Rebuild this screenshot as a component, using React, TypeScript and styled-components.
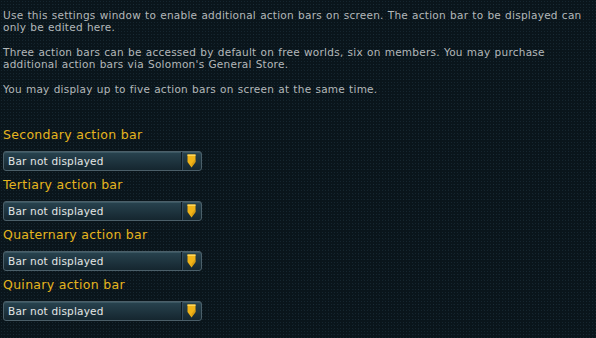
import React from "react";
import styled, { createGlobalStyle } from "styled-components";

const GlobalStyle = createGlobalStyle`
  html, body {
    margin: 0;
    padding: 0;
    background: #0a151b;
  }
`;

const bars = [
  "Secondary action bar",
  "Tertiary action bar",
  "Quaternary action bar",
  "Quinary action bar",
];

const ShieldIcon = () => (
  <svg width="9" height="14" viewBox="0 0 9 14">
    <path d="M0.5 0.5 H8.5 V8 L4.5 13.5 L0.5 8 Z" fill="#f0b419" />
    <path d="M0.5 0.5 H8.5 V2 H0.5 Z" fill="#ffd75a" />
    <path d="M4.5 13.5 L8.5 8 V5 L4.5 10 Z" fill="#c98d0c" opacity="0.6" />
  </svg>
);

const App: React.FC = () => {
  return (
    <Page>
      <GlobalStyle />
      <Intro>
        <p>
          Use this settings window to enable additional action bars on screen.
          The action bar to be displayed can only be edited here.
        </p>
        <p>
          Three action bars can be accessed by default on free worlds, six on
          members. You may purchase additional action bars via Solomon's
          General Store.
        </p>
        <p>You may display up to five action bars on screen at the same time.</p>
      </Intro>
      <BarList>
        {bars.map((label) => (
          <BarSetting key={label}>
            <Label>{label}</Label>
            <Dropdown>
              <DropdownText>Bar not displayed</DropdownText>
              <DropdownArrow>
                <ShieldIcon />
              </DropdownArrow>
            </Dropdown>
          </BarSetting>
        ))}
      </BarList>
    </Page>
  );
};

const Page = styled.div`
  width: 596px;
  height: 338px;
  box-sizing: border-box;
  overflow: hidden;
  padding: 9px 0 0 3px;
  background-color: #0a151b;
  background-image: radial-gradient(rgba(60, 90, 110, 0.25) 0.5px, transparent 0.6px),
    radial-gradient(rgba(40, 70, 90, 0.2) 0.5px, transparent 0.6px);
  background-size: 3px 3px, 5px 5px;
  background-position: 0 0, 1px 2px;
  font-family: "DejaVu Sans", sans-serif;
`;

const Intro = styled.div`
  width: 590px;
  color: #b3b8ba;
  font-size: 10.5px;
  letter-spacing: 0.25px;
  word-spacing: 0.5px;
  line-height: 12px;

  p {
    margin: 0 0 13px 0;
  }
`;

const BarList = styled.div`
  margin-top: 32px;
  display: flex;
  flex-direction: column;
  gap: 6px;
`;

const BarSetting = styled.div`
  display: flex;
  flex-direction: column;
  gap: 8px;
`;

const Label = styled.div`
  color: #e6b51e;
  font-size: 12.5px;
  line-height: 16px;
  letter-spacing: 0.3px;
`;

const Dropdown = styled.div`
  width: 199px;
  height: 20px;
  box-sizing: border-box;
  display: flex;
  align-items: stretch;
  border: 1px solid #4b5f69;
  border-radius: 3px;
  background: linear-gradient(#28434f, #15262f);
  box-shadow: inset 0 1px 0 rgba(120, 150, 160, 0.25);
`;

const DropdownText = styled.div`
  flex: 1;
  display: flex;
  align-items: center;
  padding-left: 4px;
  color: #e4e6e6;
  font-size: 10.5px;
  letter-spacing: 0.2px;
`;

const DropdownArrow = styled.div`
  width: 19px;
  display: flex;
  align-items: center;
  justify-content: center;
  border-left: 1px solid #0c171d;
  box-shadow: inset 1px 0 0 #35495a;
`;

export default App;
